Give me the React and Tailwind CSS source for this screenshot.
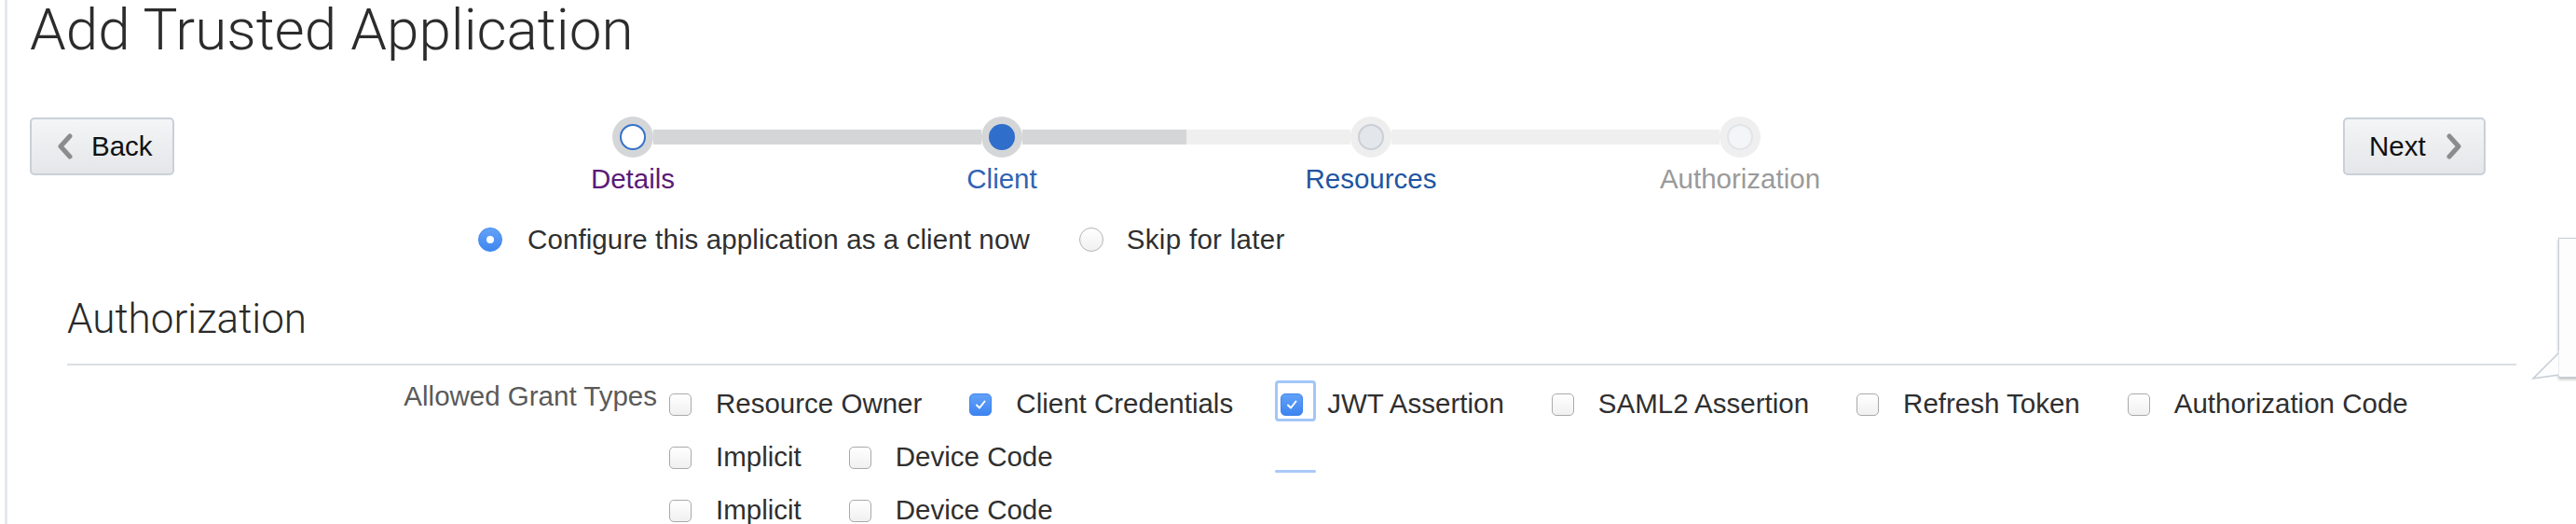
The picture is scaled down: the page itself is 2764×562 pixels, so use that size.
import React from "react";

function ChevronLeft() {
  return (
    <svg width="20" height="28" viewBox="0 0 20 28" className="shrink-0">
      <path d="M15 3 L5 14 L15 25" fill="none" stroke="#8c8c8c" strokeWidth="5" strokeLinecap="round" strokeLinejoin="round" />
    </svg>
  );
}
function ChevronRight() {
  return (
    <svg width="20" height="28" viewBox="0 0 20 28" className="shrink-0">
      <path d="M5 3 L15 14 L5 25" fill="none" stroke="#8c8c8c" strokeWidth="5" strokeLinecap="round" strokeLinejoin="round" />
    </svg>
  );
}

function Step({ label, labelColor, leftBar, rightBar, outer, inner }) {
  return (
    <div className="flex w-[396px] flex-col items-center">
      <div className="flex h-[44px] w-full items-center">
        <div className={`h-[16px] flex-1 ${leftBar}`} />
        <div className={`flex h-[44px] w-[44px] items-center justify-center rounded-full ${outer}`}>
          <div className={`h-[28px] w-[28px] rounded-full ${inner}`} />
        </div>
        <div className={`h-[16px] flex-1 ${rightBar}`} />
      </div>
      <div className={`mt-[7px] text-[29.5px] leading-[32px] ${labelColor}`}>{label}</div>
    </div>
  );
}

function Check({ checked, focus }) {
  return (
    <div className="relative mt-[3px] h-[24px] w-[24px] shrink-0">
      {focus && (
        <>
          <div className="absolute left-[-6px] top-[-14px] h-[44px] w-[44px] rounded-[4px] border-[3px] border-[#a3c6f7]" />
          <div className="absolute left-[-6px] top-[82px] h-[3px] w-[44px] rounded-full bg-[#a9c9f7]" />
        </>
      )}
      {checked ? (
        <div className="relative flex h-[24px] w-[24px] items-center justify-center rounded-[5px] border border-[#3f85ee] bg-gradient-to-b from-[#62a1f8] to-[#3d84f0]">
          <svg width="14" height="14" viewBox="0 0 14 14">
            <path d="M3 7.5 L6 10.5 L11.5 3.5" fill="none" stroke="#ffffff" strokeWidth="2" strokeLinecap="round" strokeLinejoin="round" />
          </svg>
        </div>
      ) : (
        <div className="h-[24px] w-[24px] rounded-[5px] border-[1.5px] border-[#a9a9a9] bg-gradient-to-b from-white to-[#f0f0f0]" />
      )}
    </div>
  );
}

function Item({ label, checked, focus }) {
  return (
    <div className="mr-[51px] flex items-center">
      <Check checked={checked} focus={focus} />
      <span className="ml-[26px] text-[29.5px] leading-[32px] text-[#2f2f2f]">{label}</span>
    </div>
  );
}

export default function App() {
  return (
    <div className="relative h-[562px] w-[2764px] overflow-hidden bg-white font-['Liberation_Sans',Arial,sans-serif] text-[#333]">
      <div className="ml-[5px] h-full border-l-[3px] border-[#e5e8ec] pl-[24px]">
        <h1 className="pt-[1px] font-['Roboto',sans-serif] text-[62px] font-light leading-[62px] text-[#2c2c2c]">
          Add Trusted Application
        </h1>

        <div className="mr-[97px] mt-[62px] flex items-start">
          <button className="mt-[1px] flex h-[62px] w-[155px] items-center rounded-[5px] border-2 border-[#c9d0d8] bg-gradient-to-b from-[#f4f5f6] to-[#e4e6e9] pl-[26px]">
            <ChevronLeft />
            <span className="ml-[18px] text-[29.5px] leading-[32px] text-[#111]">Back</span>
          </button>

          <div className="ml-[294px] flex">
            <Step label="Details" labelColor="text-[#5c1a77]" leftBar="" rightBar="bg-[#d5d6d8]" outer="bg-[#d5d6d8]" inner="border-[2.5px] border-[#3572c9] bg-white" />
            <Step label="Client" labelColor="text-[#2f64b2]" leftBar="bg-[#d5d6d8]" rightBar="bg-[#d5d6d8]" outer="bg-[#d5d6d8]" inner="bg-[#2f6ecb]" />
            <Step label="Resources" labelColor="text-[#1f55a2]" leftBar="bg-[#efefef]" rightBar="bg-[#efefef]" outer="bg-[#eeeeee]" inner="border-2 border-[#c9cfd6] bg-[#e3e6ea]" />
            <Step label="Authorization" labelColor="text-[#9a9a9a]" leftBar="bg-[#efefef]" rightBar="" outer="bg-[#efefef]" inner="border-2 border-[#e1e5e9] bg-[#f4f5f7]" />
          </div>

          <button className="ml-auto mt-[1px] flex h-[62px] w-[153px] items-center rounded-[5px] border-2 border-[#c9d0d8] bg-gradient-to-b from-[#f4f5f6] to-[#e4e6e9] pl-[26px]">
            <span className="text-[29.5px] leading-[32px] text-[#111]">Next</span>
            <span className="ml-[20px]"><ChevronRight /></span>
          </button>
        </div>

        <div className="ml-[481px] mt-[33px] flex items-center">
          <div className="flex h-[26px] w-[26px] items-center justify-center rounded-full border border-[#3f86ee] bg-gradient-to-b from-[#64a2f8] to-[#3f86f0]">
            <div className="h-[8px] w-[8px] rounded-full bg-white" />
          </div>
          <span className="ml-[27px] text-[29.5px] leading-[32px] tracking-[0.1px] text-[#2f2f2f]">Configure this application as a client now</span>
          <div className="ml-[53px] h-[26px] w-[26px] rounded-full border-[1.5px] border-[#b3b3b3] bg-gradient-to-b from-white to-[#f0f0f0]" />
          <span className="ml-[25px] text-[29.5px] leading-[32px] tracking-[0.3px] text-[#2f2f2f]">Skip for later</span>
        </div>

        <div className="ml-[40px] mr-[64px] mt-[45px] border-b-2 border-[#dadee3] pb-[24px]">
          <h2 className="font-['Roboto',sans-serif] text-[44px] font-light leading-[48px] text-[#2a2a2a]">Authorization</h2>
        </div>

        <div className="mt-[12px] flex items-start">
          <div className="w-[673px] pt-[5px] text-right text-[29.5px] leading-[32px] text-[#5a5a5a]">Allowed Grant Types</div>
          <div className="ml-[13px] flex flex-col">
            <div className="flex h-[57px] items-center">
              <Item label="Resource Owner" />
              <Item label="Client Credentials" checked />
              <Item label="JWT Assertion" checked focus />
              <Item label="SAML2 Assertion" />
              <Item label="Refresh Token" />
              <Item label="Authorization Code" />
            </div>
            <div className="flex h-[57px] items-center">
              <Item label="Implicit" />
              <Item label="Device Code" />
            </div>
            <div className="flex h-[57px] items-center">
              <Item label="Implicit" />
              <Item label="Device Code" />
            </div>
          </div>
        </div>
      </div>

      <div className="absolute left-[2745px] top-[255px] h-[150px] w-[60px] border border-[#c6cdd4] bg-[#fdfdfd] shadow-[0_2px_3px_rgba(0,0,0,0.25)]" />
      <svg className="absolute left-[2714px] top-[372px]" width="36" height="40" viewBox="0 0 36 40">
        <polygon points="32,6 4,34 32,30" fill="#fdfdfd" stroke="#c6cdd4" strokeWidth="1.5" strokeLinejoin="miter" />
        <rect x="31.5" y="4" width="4" height="27" fill="#fdfdfd" />
      </svg>
    </div>
  );
}
